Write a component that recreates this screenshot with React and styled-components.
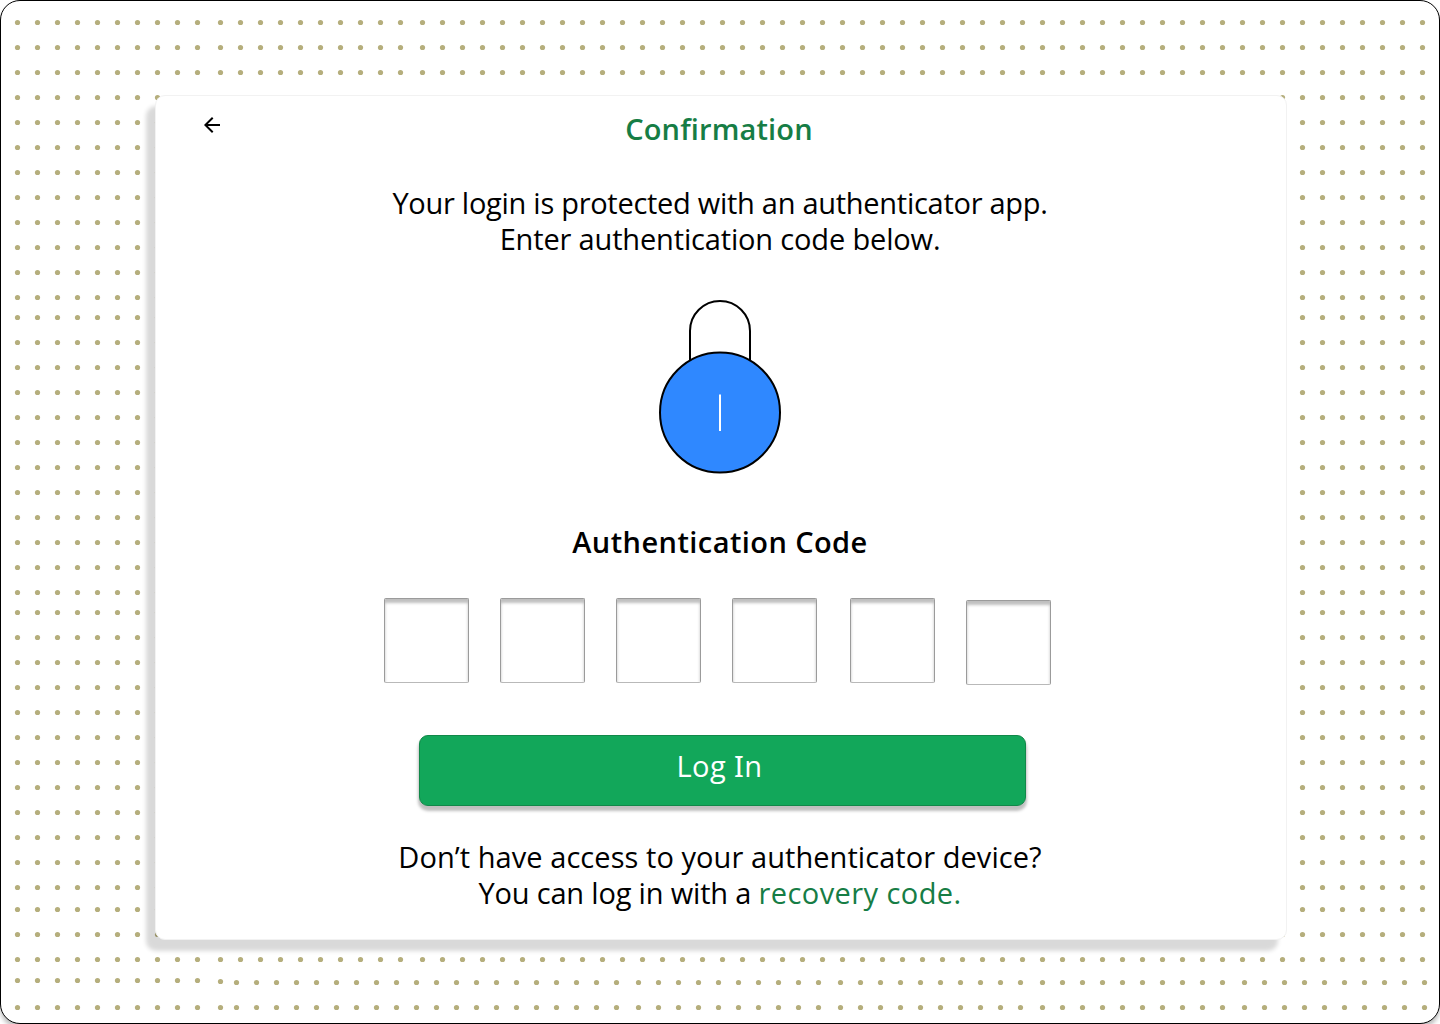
import React from "react";
import styled, { createGlobalStyle } from "styled-components";

const GlobalStyle = createGlobalStyle`
  *, *::before, *::after { box-sizing: border-box; }
  html, body { margin: 0; padding: 0; background: #fff; overflow: hidden; }
  body { font-family: "Open Sans", "Noto Sans", sans-serif; color: #000; }
`;

const Frame = styled.main`
  position: relative;
  display: flex;
  justify-content: center;
  align-items: flex-start;
  width: 1440px;
  height: 1024px;
  padding: 94px 0 0 1px;
  background: #fff;
  border: 1px solid #000;
  border-radius: 20px;
  box-shadow: 0 4px 4px rgba(0, 0, 0, 0.25);
`;

const DotField = styled.svg`
  position: absolute;
  top: -1px;
  left: -1px;
  fill: #b5ae7c;
`;

const Card = styled.section`
  position: relative;
  display: flex;
  flex-direction: column;
  align-items: center;
  width: 1132px;
  height: 845px;
  padding-right: 1px;
  background: #fff;
  border: 1px solid #f2f2f2;
  border-radius: 10px;
  box-shadow: -9px 11px 4px rgba(0, 0, 0, 0.15);
`;

const Header = styled.header`
  display: grid;
  grid-template-columns: 120px 1fr 120px;
  align-items: start;
  width: 100%;
  padding: 15px 2px 0 0;
`;

const BackButton = styled.button`
  display: flex;
  width: 24px;
  height: 24px;
  margin: 2px 0 0 44px;
  padding: 0;
  border: 0;
  background: none;
`;

const Line = styled.span`
  display: block;
  font-size: 29px;
  line-height: 36px;
  white-space: nowrap;
  letter-spacing: ${(p) => p.$track || 0}px;
`;

const Title = styled.h1`
  margin: 0;
  text-align: center;
  font-weight: 600;
  color: #167d45;
`;

const Message = styled.p`
  margin: ${(p) => p.$top}px 0 0;
  text-align: center;
`;

const Lock = styled.svg`
  display: block;
  width: 124px;
  height: 176px;
  margin-top: 41px;
`;

const Subtitle = styled.h2`
  margin: 50px 0 0;
  font-weight: 600;
`;

const CodeRow = styled.div`
  display: flex;
  gap: 31px;
  width: 667px;
  margin: 38px 5px 0 0;
`;

const Digit = styled.input`
  width: 85px;
  height: 85px;
  margin: ${(p) => p.$drop || 0}px 0 0 ${(p) => p.$shift || 0}px;
  padding: 0;
  border: 1px solid #9b9b9b;
  border-bottom-color: #b9b9b9;
  border-radius: 2px;
  background: #fff;
  box-shadow: inset 0 4px 3px rgba(0, 0, 0, 0.25);
  text-align: center;
  font: 400 36px "Open Sans", sans-serif;
  outline: none;
`;

const LoginButton = styled.button`
  width: 607px;
  height: 71px;
  margin: 50px 0 0 5px;
  padding: 0 6px 9px 0;
  border: 1px solid #118849;
  border-radius: 9px;
  background: #12a75a;
  box-shadow: 0 4px 3px 1px rgba(0, 0, 0, 0.25);
  color: #fff;
  font: 400 29px "Open Sans", sans-serif;
`;

const SlabCap = styled.span`
  font-family: "Noto Sans", sans-serif;
`;

const RecoveryLink = styled.a`
  color: #167d45;
  letter-spacing: 0.42px;
  text-decoration: none;
`;

const range = (start, count) => Array.from({ length: count }, (_, i) => start + i * 20);
const steps = (start, count) => Array.from({ length: count }, (_, i) => start + i * 25);

const columns = [...range(17.5, 10), ...range(220.5, 10), ...range(422.5, 51)];
const rows = [...steps(22.5, 12), ...steps(317.5, 12), ...steps(612.5, 12), ...steps(909.5, 3)];
const footColumns = [
  ...range(236.5, 20),
  ...range(638.5, 10),
  ...range(840.5, 10),
  ...range(1042.5, 10),
  ...range(1244.5, 10),
];

const dots = [
  ...rows.flatMap((y) =>
    columns.filter((x) => y < 80 || y > 950 || x < 160 || x > 1280).map((x) => [x, y])
  ),
  ...range(17.5, 10).map((x) => [x, 980.5]),
  [220.5, 981.5],
  ...footColumns.map((x) => [x, 982.5]),
  ...[...range(17.5, 10), 220.5, ...footColumns].map((x) => [x, 1007.5]),
];

const digits = [{}, {}, {}, {}, { shift: 2 }, { drop: 2 }];

export default function App() {
  return (
    <>
      <GlobalStyle />
      <Frame>
        <DotField width="1440" height="1024" aria-hidden="true">
          {dots.map(([x, y]) => (
            <circle key={`${x}-${y}`} cx={x} cy={y} r="2.6" />
          ))}
        </DotField>
        <Card>
          <Header>
            <BackButton aria-label="Back">
              <svg width="24" height="24" viewBox="0 0 24 24">
                <path d="M20 11H7.83l5.59-5.59L12 4l-8 8 8 8 1.41-1.41L7.83 13H20v-2z" />
              </svg>
            </BackButton>
            <Title>
              <Line $track={0.15}>Confirmation</Line>
            </Title>
          </Header>
          <Message $top={38}>
            <Line $track={-0.28}>Your login is protected with an authenticator app.</Line>
            <Line $track={-0.16}>Enter authentication code below.</Line>
          </Message>
          <Lock viewBox="658 298 124 176" fill="none" strokeWidth="2">
            <path d="M690 372V331a30 30 0 0 1 60 0v41" stroke="#000" />
            <circle cx="720" cy="412.5" r="60" fill="#2f88ff" stroke="#000" />
            <path d="M720 394.5V431" stroke="#fff" />
          </Lock>
          <Subtitle>
            <Line $track={0.42}>Authentication Code</Line>
          </Subtitle>
          <CodeRow>
            {digits.map((digit, i) => (
              <Digit
                key={i}
                maxLength={1}
                aria-label={`Digit ${i + 1}`}
                $shift={digit.shift}
                $drop={digit.drop}
              />
            ))}
          </CodeRow>
          <LoginButton>
            <Line $track={0.4}>
              Log <SlabCap>I</SlabCap>n
            </Line>
          </LoginButton>
          <Message $top={33}>
            <Line $track={0.06}>Don’t have access to your authenticator device?</Line>
            <Line $track={-0.18}>
              You can log in with a <RecoveryLink>recovery code.</RecoveryLink>
            </Line>
          </Message>
        </Card>
      </Frame>
    </>
  );
}
